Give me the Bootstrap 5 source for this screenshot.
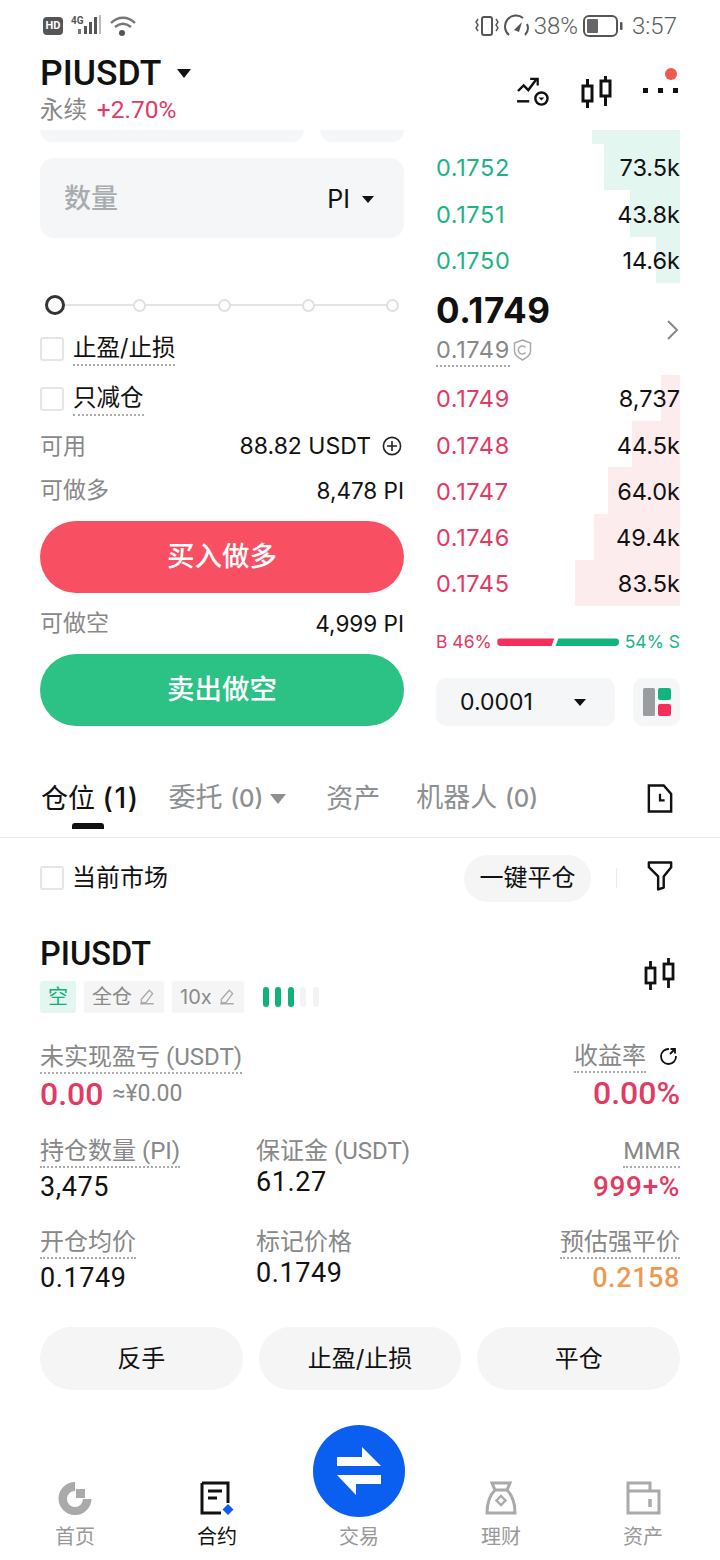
<!DOCTYPE html>
<html lang="zh-CN">
<head>
    <meta charset="UTF-8">
    <meta name="viewport" content="width=device-width, initial-scale=1.0">
    <title>PIUSDT</title>
    <link href="https://cdn.jsdelivr.net/npm/bootstrap@5.3.0/dist/css/bootstrap.min.css" rel="stylesheet">
    <style>
        body {
            background: #fff;
            color: #111;
            font-family: Inter, "Noto Sans CJK SC", sans-serif;
            width: 720px;
            height: 1560px;
            overflow: hidden;
            font-size: 24px;
        }
        /* status bar */
        .status-row { height: 50px; padding: 2px 43px 0; color: #5c5c5c; font-family: Roboto, "Noto Sans CJK SC", sans-serif; font-size: 24px; font-weight: 300; }
        .hd-chip { width: 20px; height: 18px; background: #555; color: #fff; border-radius: 4px; font-size: 11px; font-weight: 700; line-height: 18px; text-align: center; }
        .top-head { height: 80px; padding: 0 40px; }
        .pair-name { font-family: Roboto, sans-serif; font-size: 35.5px; font-weight: 500; line-height: 44px; margin-top: 1px; }
        .pair-sub { font-size: 23.5px; line-height: 30px; color: #888; font-family: Roboto, "Noto Sans CJK SC", sans-serif; }
        .pair-sub .txt-red { font-size: 24.5px; }
        .txt-red { color: #e23a63; }
        .txt-green { color: #1eb386; }
        /* trade area */
        .trade-wrap { height: 600px; padding: 0 40px; gap: 32px; overflow: hidden; }
        .left-col { width: 364px; flex: none; }
        .right-col { width: 244px; flex: none; }
        .stub-input { height: 12px; background: #f4f6f7; border-radius: 0 0 16px 16px; }
        .qty-input { height: 80px; margin-top: 16px; background: #f4f6f7; border-radius: 14px; padding: 3px 30px 0 24px; font-size: 25px; }
        .qty-ph { font-size: 27px; color: #a9acaf; font-weight: 500; }
        .caret-down { width: 0; height: 0; border-left: 6px solid transparent; border-right: 6px solid transparent; border-top: 7px solid #111; }
        .slider-wrap { margin-top: 56px; height: 22px; padding: 0 5px; }
        .slider-track { height: 2px; background: #e4e4e4; left: 5px; right: 5px; top: 10px; }
        .slider-dot { width: 13px; height: 13px; border: 2px solid #e0e0e0; border-radius: 50%; background: #fff; z-index: 1; }
        .slider-knob { width: 20px; height: 20px; border: 3px solid #333; border-radius: 50%; background: #fff; z-index: 1; margin-right: -3px; }
        .check-row { height: 50px; gap: 9px; font-size: 23.5px; padding-top: 1px; }
        .fake-check { width: 24px; height: 24px; border: 2px solid #e6e6e6; border-radius: 3px; flex: none; }
        .dot-line { border-bottom: 2px dotted #aaa; display: inline-block; line-height: 32px; }
        .info-row { font-size: 23px; color: #888; }
        .info-val { color: #111; }
        .info-small { font-size: 22.5px; }
        .act-btn { height: 72px; border-radius: 36px; color: #fff; font-size: 27.5px; font-weight: 500; border: 0; width: 100%; }
        .btn-buy { background: #f94f63; }
        .btn-sell { background: #2cc185; }
        /* order book */
        .book-top { height: 14px; }
        .book-row { height: 46.3px; padding-top: 2px; font-size: 23.5px; line-height: 1; z-index: 0; }
        .book-price { letter-spacing: .6px; }
        .depth-bar { top: 0; bottom: 0; right: 0; z-index: -1; }
        .depth-ask { background: #e3f6ef; }
        .depth-bid { background: #fdecee; }
        .mid-block { height: 92px; }
        .mid-price { font-size: 35px; font-weight: 700; line-height: 40px; padding-top: 7px; letter-spacing: .6px; }
        .mark-price { font-size: 23.5px; color: #888; line-height: 30px; margin-top: 5px; letter-spacing: .6px; }
        .mark-price .dot-line { line-height: 30px; }
        .ratio-row { margin-top: 21px; height: 30px; font-size: 17.5px; white-space: nowrap; }
        .ratio-b, .ratio-s { height: 8px; }
        .ratio-b { width: 57px; flex: none; background: #f52f5c; border-radius: 4px 0 0 4px; clip-path: polygon(0 0, 100% 0, 95% 100%, 0 100%); }
        .ratio-s { width: 64px; flex: none; background: #11b37e; border-radius: 0 4px 4px 0; clip-path: polygon(5% 0, 100% 0, 100% 100%, 0 100%); }
        .tick-row { margin-top: 21px; gap: 18px; }
        .tick-select { width: 179px; height: 48px; background: #f4f6f7; border-radius: 10px; padding: 0 29px 0 24px; font-size: 23px; }
        .layout-btn { width: 47px; height: 48px; background: #f4f6f7; border-radius: 10px; }
        /* tabs */
        .tab-bar { margin-top: 40px; height: 68px; padding: 0 40px 10px 41px; border-bottom: 1px solid #ebebeb; font-size: 27px; color: #8d8f91; }
        .tab-item { line-height: 40px; }
        .tab-item small { font-size: 24px; font-weight: 500; }
        .tab-on { color: #111; }
        .tab-on small { font-size: 28px; letter-spacing: 1.5px; }
        .tab-mark { width: 32px; height: 6px; background: #111; border-radius: 3px 3px 0 0; left: 31px; bottom: -10px; }
        .caret-grey { display: inline-block; width: 0; height: 0; border-left: 8px solid transparent; border-right: 8px solid transparent; border-top: 10px solid #8d8f91; margin-left: 7px; vertical-align: 3px; }
        .filter-row { height: 80px; padding: 0 40px; font-size: 24px; }
        .close-all { width: 127px; height: 47px; border-radius: 24px; background: #f5f5f5; font-size: 24px; margin-right: 25px; }
        .vline { width: 1px; height: 20px; background: #ebebeb; margin-right: 30px; }
        /* position card */
        .pos-card { padding: 17px 40px 0; }
        .pos-title { font-family: Roboto, sans-serif; font-size: 32.5px; font-weight: 500; line-height: 38px; }
        .tag-row { margin-top: 8px; gap: 8px; height: 32px; }
        .tag-chip { height: 32px; border-radius: 3px; background: #f5f5f5; color: #8a8a8a; font-size: 20px; padding: 0 8px; line-height: 32px; }
        .tag-short { background: #e3f6ef; color: #12b07c; }
        .lev-bars { gap: 6.5px; margin-left: 7px; }
        .lev-bars i { width: 6px; height: 20px; border-radius: 3px; background: #12b07c; display: block; }
        .lev-bars i.off { background: #f3f3f3; }
        .data-grid { display: grid; grid-template-columns: 216px 1fr auto; }
        .data-cell { height: 91px; }
        .data-first { height: 94px; }
        .data-lbl { font-size: 24px; color: #888; line-height: 30px; font-family: Roboto, "Noto Sans CJK SC", sans-serif; }
        .data-lbl .dot-line { line-height: 29px; }
        .data-num { font-size: 27px; line-height: 34px; font-family: Roboto, sans-serif; margin-top: 2px; letter-spacing: .6px; }
        .data-mid { margin-top: -1px; }
        .data-big { font-family: Roboto, sans-serif; font-size: 32px; font-weight: 500; line-height: 36px; margin-top: 2px; }
        .data-pct { font-size: 28px; font-weight: 500; }
        .approx { font-size: 23px; color: #888; font-weight: 400; margin-left: 9px; }
        .txt-orange { color: #ec9a52; }
        .btn-row { gap: 16px; margin-top: 9px; }
        .soft-btn { flex: 1; height: 63px; border-radius: 32px; background: #f5f5f5; font-size: 24px; }
        /* bottom nav */
        .tab-nav { display: grid; grid-template-columns: repeat(5, 142px); padding-left: 4px; margin-top: 35px; height: 135px; }
        .nav-cell { font-size: 20px; color: #999; justify-content: flex-end; padding-bottom: 9px; }
        .nav-cell svg { margin-bottom: 7px; }
        .nav-on { color: #111; }
        .swap-round { width: 92px; height: 92px; border-radius: 50%; background: #0a5ff0; margin-bottom: 5px; }
        .swap-round svg { margin-bottom: 0; }
    </style>
</head>
<body>
    <!-- status bar -->
    <div class="status-row d-flex justify-content-between align-items-center">
        <div class="d-flex align-items-center gap-2">
            <div class="hd-chip">HD</div>
            <svg width="30" height="24" viewBox="0 0 30 24"><rect x="7" y="15" width="3" height="5" fill="#777"/><rect x="13" y="12" width="3" height="8" fill="#555"/><rect x="18" y="8" width="3" height="12" fill="#555"/><rect x="23" y="3" width="3" height="17" fill="#555"/><rect x="28" y="1" width="2" height="19" fill="#bbb"/><text x="0" y="10" font-size="10" font-family="Roboto" font-weight="700" fill="#555">4G</text></svg>
            <svg width="28" height="22" viewBox="0 0 28 22" fill="none" stroke="#777" stroke-width="2.4"><path d="M2 8c7-7 17-7 24 0"/><path d="M6 12c5-4 11-4 16 0"/><circle cx="13" cy="18" r="3" fill="#555" stroke="none"/></svg>
        </div>
        <div class="d-flex align-items-center">
            <svg width="26" height="24" viewBox="0 0 26 24" fill="none" stroke="#555" stroke-width="2"><rect x="8" y="3" width="10" height="18" rx="2"/><path d="M4 5l-2 3 2 3-2 3 2 3M22 5l2 3-2 3 2 3-2 3" stroke-width="1.4"/></svg>
            <svg class="ms-1" width="26" height="24" viewBox="0 0 26 24" fill="none" stroke="#555" stroke-width="2"><path d="M5 21A10 10 0 0 1 19 4"/><path d="M23 10a10 10 0 0 1-2 11"/><path d="M10 16l8-8-3 10z" fill="#555" stroke="none"/></svg>
            <span class="ms-1">38%</span>
            <svg class="ms-1" width="42" height="24" viewBox="0 0 42 24" fill="none"><rect x="2" y="2" width="33" height="20" rx="5" stroke="#555" stroke-width="2"/><rect x="5" y="5" width="11" height="14" rx="1" fill="#666"/><rect x="38" y="8" width="2.5" height="8" rx="1" fill="#555"/></svg>
            <span class="ms-2">3:57</span>
        </div>
    </div>

    <!-- header -->
    <div class="top-head d-flex justify-content-between">
        <div>
            <div class="pair-name d-flex align-items-center">PIUSDT<span class="caret-down ms-3" style="border-left-width:7px;border-right-width:7px;border-top-width:9px"></span></div>
            <div class="pair-sub">永续 <span class="txt-red ms-1">+2.70%</span></div>
        </div>
        <div class="d-flex align-items-end position-relative" style="padding-bottom:24px">
            <svg width="36" height="30" viewBox="0 0 36 32" fill="none" stroke="#111" stroke-width="2.6"><path d="M2 16l6-6 5 5 9-12"/><path d="M15 3h8v7" stroke-width="2.4"/><path d="M1 27h13"/><circle cx="27" cy="24" r="6.5"/><path d="M24 23h6l-3 3z" fill="#111" stroke="none"/></svg>
            <svg style="margin-left:30px;margin-bottom:-2px" width="31" height="32" viewBox="0 0 31 32" fill="none" stroke="#111" stroke-width="3"><rect x="2" y="10" width="9" height="15"/><path d="M6.5 3v7M6.5 25v7"/><rect x="20" y="5" width="9" height="15"/><path d="M24.5 0v5M24.5 20v10"/></svg>
            <svg style="margin:0 2px 13px 31px" width="35" height="5" viewBox="0 0 35 5"><rect x="0" y="0" width="5" height="5" fill="#111"/><rect x="15" y="0" width="5" height="5" fill="#111"/><rect x="30" y="0" width="5" height="5" fill="#111"/></svg>
            <span class="position-absolute rounded-circle" style="width:12px;height:12px;background:#ef5a4c;right:3px;top:18px"></span>
        </div>
    </div>

    <!-- trade form and order book -->
    <div class="trade-wrap d-flex">
        <div class="left-col">
            <div class="d-flex gap-3">
                <div class="stub-input flex-grow-1"></div>
                <div class="stub-input" style="width:84px"></div>
            </div>
            <div class="qty-input d-flex justify-content-between align-items-center">
                <span class="qty-ph">数量</span>
                <span class="d-flex align-items-center gap-2"><span>PI</span><span class="caret-down ms-1"></span></span>
            </div>
            <div class="slider-wrap position-relative d-flex justify-content-between align-items-center">
                <div class="slider-track position-absolute"></div>
                <div class="slider-knob"></div>
                <div class="slider-dot"></div>
                <div class="slider-dot"></div>
                <div class="slider-dot"></div>
                <div class="slider-dot"></div>
            </div>
            <div class="check-row d-flex align-items-center" style="margin-top:7px"><span class="fake-check"></span><span class="dot-line">止盈/止损</span></div>
            <div class="check-row d-flex align-items-center"><span class="fake-check"></span><span class="dot-line">只减仓</span></div>
            <div class="info-row d-flex justify-content-between align-items-center" style="height:44px;margin-top:1px">
                <span>可用</span>
                <span class="info-val d-flex align-items-center">88.82 USDT<svg style="margin:0 2px 0 11px" width="20" height="20" viewBox="0 0 20 20" fill="none" stroke="#222" stroke-width="1.6"><circle cx="10" cy="10" r="8.6"/><path d="M10 5v10M5 10h10"/></svg></span>
            </div>
            <div class="info-row d-flex justify-content-between align-items-center" style="height:45px">
                <span>可做多</span>
                <span class="info-val info-small">8,478 PI</span>
            </div>
            <div style="height:8px"></div>
            <button class="act-btn btn-buy d-block">买入做多</button>
            <div class="info-row d-flex justify-content-between align-items-center" style="height:61px">
                <span>可做空</span>
                <span class="info-val info-small">4,999 PI</span>
            </div>
            <button class="act-btn btn-sell d-block">卖出做空</button>
        </div>

        <div class="right-col">
            <div class="book-top d-flex justify-content-end"><div class="depth-ask" style="width:88px"></div></div>
            <div id="askRows"></div>
            <div class="mid-block d-flex justify-content-between align-items-start">
                <div>
                    <div class="mid-price">0.1749</div>
                    <div class="mark-price d-flex"><span class="dot-line">0.1749</span><svg class="mt-1" style="margin-left:3px" width="19" height="22" viewBox="0 0 19 22" fill="none" stroke="#aaa" stroke-width="1.5"><path d="M9.5 1l8 3v8c0 4-4 7-8 9-4-2-8-5-8-9V4z"/><path d="M12.5 8.5a4 4 0 1 0 0 5"/></svg></div>
                </div>
                <svg style="margin-top:37px;margin-right:1px" width="12" height="20" viewBox="0 0 12 20" fill="none" stroke="#888" stroke-width="2"><path d="M1 1l9 9-9 9"/></svg>
            </div>
            <div id="bidRows"></div>
            <div class="ratio-row d-flex align-items-center justify-content-between">
                <span class="txt-red">B 46%</span>
                <div class="d-flex" style="gap:1px"><div class="ratio-b"></div><div class="ratio-s"></div></div>
                <span class="txt-green">54% S</span>
            </div>
            <div class="tick-row d-flex">
                <div class="tick-select d-flex justify-content-between align-items-center"><span>0.0001</span><span class="caret-down"></span></div>
                <div class="layout-btn d-flex align-items-center justify-content-center">
                    <svg width="28" height="28" viewBox="0 0 28 28"><rect width="12" height="28" rx="1.5" fill="#9a9da0"/><rect x="15" width="13" height="12" rx="2" fill="#11b37e"/><rect x="15" y="16" width="13" height="12" rx="2" fill="#f52f5c"/></svg>
                </div>
            </div>
        </div>
    </div>

    <!-- tabs -->
    <div class="tab-bar d-flex align-items-center">
        <div class="tab-item tab-on position-relative">仓位 <small>(1)</small><div class="tab-mark position-absolute"></div></div>
        <div class="tab-item" style="margin-left:29px">委托 <small>(0)</small><span class="caret-grey"></span></div>
        <div class="tab-item" style="margin-left:40px">资产</div>
        <div class="tab-item" style="margin-left:36px">机器人 <small>(0)</small></div>
        <svg class="ms-auto" style="margin-right:7px" width="26" height="31" viewBox="0 0 28 32" fill="none" stroke="#111" stroke-width="2.6"><path d="M2 2h16l8 9v19H2z"/><path d="M14 11v7h5" stroke-width="2.4"/></svg>
    </div>

    <!-- filter row -->
    <div class="filter-row d-flex align-items-center">
        <span class="fake-check me-2"></span>
        <span>当前市场</span>
        <div class="close-all ms-auto d-flex align-items-center justify-content-center">一键平仓</div>
        <div class="vline"></div>
        <svg style="margin-right:7px;margin-top:-6px" width="26" height="31" viewBox="0 0 28 32" fill="none" stroke="#111" stroke-width="2.6" stroke-linejoin="round"><path d="M2 2h24v5l-8 10v12l-6 2V17L2 7z"/></svg>
    </div>

    <!-- position -->
    <div class="pos-card">
        <div class="d-flex justify-content-between">
            <div>
                <div class="pos-title">PIUSDT</div>
                <div class="tag-row d-flex align-items-center">
                    <span class="tag-chip tag-short">空</span>
                    <span class="tag-chip d-flex align-items-center">全仓<svg style="margin-left:6px" width="18" height="18" viewBox="0 0 16 16" fill="none" stroke="#aaa" stroke-width="1.2"><path d="M2 14h12M3 10l7-8 3 3-6 8H3z"/></svg></span>
                    <span class="tag-chip d-flex align-items-center">10x<svg style="margin-left:6px" width="18" height="18" viewBox="0 0 16 16" fill="none" stroke="#aaa" stroke-width="1.2"><path d="M2 14h12M3 10l7-8 3 3-6 8H3z"/></svg></span>
                    <div class="lev-bars d-flex" style="margin-left:11px"><i></i><i></i><i></i><i class="off"></i><i class="off"></i></div>
                </div>
            </div>
            <svg class="align-self-center" style="margin-right:5px" width="31" height="32" viewBox="0 0 31 32" fill="none" stroke="#111" stroke-width="2.8"><rect x="2" y="10" width="9" height="15"/><path d="M6.5 3v7M6.5 25v7"/><rect x="20" y="6" width="9" height="15"/><path d="M24.5 0v6M24.5 21v9"/></svg>
        </div>

        <div class="data-grid" style="margin-top:29px">
            <div class="data-cell data-first" style="grid-column:span 2">
                <div class="data-lbl"><span class="dot-line">未实现盈亏 (USDT)</span></div>
                <div class="data-big txt-red d-flex align-items-center">0.00<span class="approx">≈¥0.00</span></div>
            </div>
            <div class="data-cell data-first text-end">
                <div class="data-lbl d-flex justify-content-end align-items-start"><span class="dot-line">收益率</span><svg class="mt-1" style="margin:0 2px 0 12px" width="20" height="20" viewBox="0 0 20 20" fill="none" stroke="#111" stroke-width="1.8"><path d="M11 3a7.500 7.500 0 1 0 7 7"/><path d="M12 8l5-5M12.500 3H17v4.500"/></svg></div>
                <div class="data-big txt-red">0.00%</div>
            </div>
            <div class="data-cell">
                <div class="data-lbl"><span class="dot-line">持仓数量 (PI)</span></div>
                <div class="data-num">3,475</div>
            </div>
            <div class="data-cell">
                <div class="data-lbl">保证金 (USDT)</div>
                <div class="data-num data-mid">61.27</div>
            </div>
            <div class="data-cell text-end">
                <div class="data-lbl"><span class="dot-line">MMR</span></div>
                <div class="data-num data-pct txt-red">999+%</div>
            </div>
            <div class="data-cell">
                <div class="data-lbl"><span class="dot-line">开仓均价</span></div>
                <div class="data-num">0.1749</div>
            </div>
            <div class="data-cell">
                <div class="data-lbl">标记价格</div>
                <div class="data-num data-mid">0.1749</div>
            </div>
            <div class="data-cell text-end">
                <div class="data-lbl"><span class="dot-line">预估强平价</span></div>
                <div class="data-num txt-orange" style="font-weight:500">0.2158</div>
            </div>
        </div>

        <div class="btn-row d-flex">
            <div class="soft-btn d-flex align-items-center justify-content-center">反手</div>
            <div class="soft-btn d-flex align-items-center justify-content-center">止盈/止损</div>
            <div class="soft-btn d-flex align-items-center justify-content-center">平仓</div>
        </div>
    </div>

    <!-- bottom nav -->
    <div class="tab-nav">
        <div class="nav-cell d-flex flex-column align-items-center">
            <svg width="34" height="34" viewBox="0 0 34 34"><path d="M17 1A16.500 16.500 0 1 0 33.500 18H25a8 8 0 1 1-8-8z" fill="#aaa"/><rect x="18" y="8" width="9" height="9" fill="#aaa"/></svg>
            <span>首页</span>
        </div>
        <div class="nav-cell nav-on d-flex flex-column align-items-center">
            <svg width="36" height="34" viewBox="0 0 36 34" fill="none"><path d="M3 2h26v20M22 32H3V2" stroke="#111" stroke-width="3"/><path d="M9 10h14M9 17h9" stroke="#111" stroke-width="3"/><path d="M29 23l5.500 5.500-5.500 5.500-5.500-5.500z" fill="#0a5ff0"/></svg>
            <span>合约</span>
        </div>
        <div class="nav-cell d-flex flex-column align-items-center">
            <div class="swap-round d-flex align-items-center justify-content-center">
                <svg width="46" height="48" viewBox="0 0 46 48" fill="#fff"><path d="M26 0l19 19H1v-9h25zM1 28h44v9H20v11z"/></svg>
            </div>
            <span>交易</span>
        </div>
        <div class="nav-cell d-flex flex-column align-items-center">
            <svg width="32" height="34" viewBox="0 0 32 34" fill="none" stroke="#aaa" stroke-width="3"><path d="M7 2h18l-3 7H10zM10 9C5 14 2 22 2 32h28c0-10-3-18-8-23"/><path d="M16 15l4.500 4.500-4.500 4.500-4.500-4.500z" stroke-width="2.400"/></svg>
            <span>理财</span>
        </div>
        <div class="nav-cell d-flex flex-column align-items-center">
            <svg width="35" height="34" viewBox="0 0 35 34" fill="none" stroke="#aaa" stroke-width="3"><path d="M2 32V2h22v8h9v22zM2 10h22"/><path d="M24 18v8" stroke-width="3.500"/></svg>
            <span>资产</span>
        </div>
    </div>

    <script src="https://cdn.jsdelivr.net/npm/bootstrap@5.3.0/dist/js/bootstrap.bundle.min.js"></script>
    <script>
        // order book rows: [price, size, depth bar width in px]
        const asks = [["0.1752", "73.5k", 76], ["0.1751", "43.8k", 50], ["0.1750", "14.6k", 24]];
        const bids = [["0.1749", "8,737", 19], ["0.1748", "44.5k", 48], ["0.1747", "64.0k", 72], ["0.1746", "49.4k", 86], ["0.1745", "83.5k", 105]];

        function renderRows(list, target, cls, depthCls) {
            document.getElementById(target).innerHTML = list.map(r => `
                <div class="book-row position-relative d-flex justify-content-between align-items-center">
                    <div class="depth-bar position-absolute ${depthCls}" style="width:${r[2]}px"></div>
                    <span class="book-price ${cls}">${r[0]}</span><span>${r[1]}</span>
                </div>`).join("");
        }
        renderRows(asks, "askRows", "txt-green", "depth-ask");
        renderRows(bids, "bidRows", "txt-red", "depth-bid");
    </script>
</body>
</html>
